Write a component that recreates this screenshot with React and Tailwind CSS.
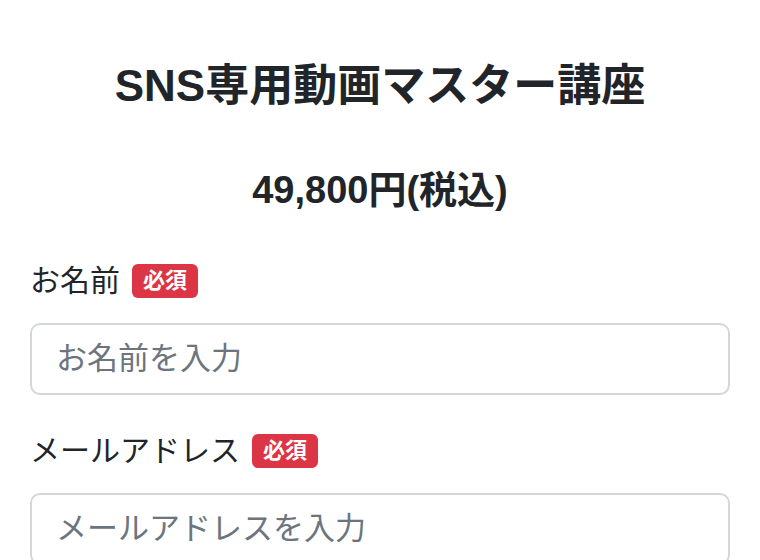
import React from "react";

const font = { fontFamily: '"Liberation Sans", "Noto Sans CJK JP", sans-serif' };

function Badge() {
  return (
    <span className="inline-flex h-[34px] items-center rounded-[6px] bg-[#dc3545] px-[11px] text-[22px] font-bold leading-none text-white">
      必須
    </span>
  );
}

function Field({ label, placeholder, type }) {
  return (
    <div>
      <div className="flex h-[34px] items-center gap-[12px]">
        <span className="text-[30px] leading-none text-[#212529]">{label}</span>
        <Badge />
      </div>
      <input
        type={type}
        placeholder={placeholder}
        className="mt-[25px] block h-[72px] w-full rounded-[10px] border-2 border-[#d4d7da] bg-white px-[24px] text-[31px] text-[#212529] outline-none placeholder:text-[#6c757d]"
        style={font}
      />
    </div>
  );
}

export default function App() {
  return (
    <div className="min-h-[560px] overflow-hidden bg-white px-[30px] pt-[59px] text-[#212529]" style={font}>
      <h1 className="text-center text-[44px] font-bold leading-[53px] text-[#212529]">SNS専用動画マスター講座</h1>
      <p className="mt-[55px] text-center text-[38px] font-bold leading-[46px] text-[#212529]">49,800円(税込)</p>
      <div className="mt-[51px] flex flex-col gap-[39px]">
        <Field label="お名前" placeholder="お名前を入力" type="text" />
        <Field label="メールアドレス" placeholder="メールアドレスを入力" type="email" />
      </div>
    </div>
  );
}
